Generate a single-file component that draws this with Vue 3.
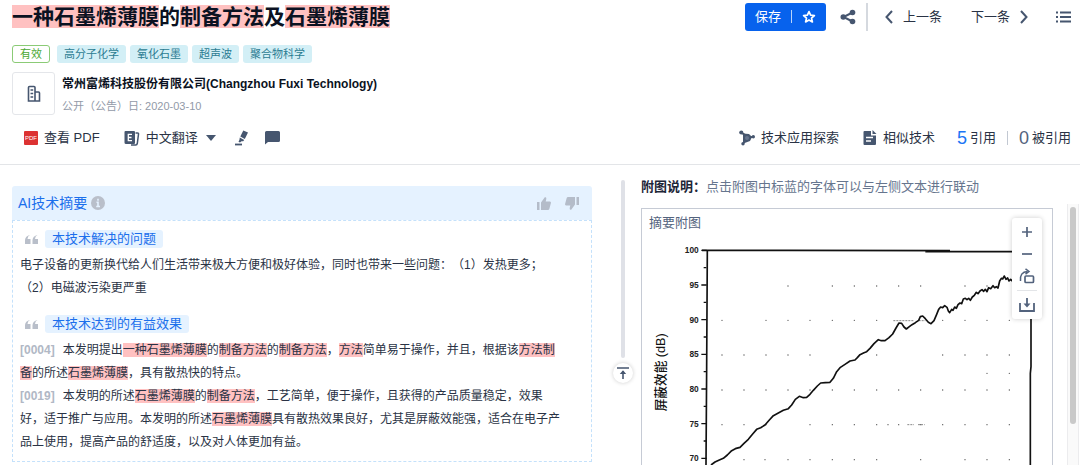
<script setup>
const title = [
  { t: '一种石墨烯薄膜', m: true },
  { t: '的' },
  { t: '制备方法', m: true },
  { t: '及' },
  { t: '石墨烯薄膜', m: true },
]

const tags = ['高分子化学', '氧化石墨', '超声波', '聚合物科学']

const effects = [
  {
    no: '[0004]',
    lines: [
      [
        { t: '本发明提出' },
        { t: '一种石墨烯薄膜', m: true },
        { t: '的' },
        { t: '制备方法', m: true },
        { t: '的' },
        { t: '制备方法', m: true },
        { t: '，' },
        { t: '方法', m: true },
        { t: '简单易于操作，并且，根据该' },
        { t: '方法制', m: true },
      ],
      [
        { t: '备', m: true },
        { t: '的所述' },
        { t: '石墨烯薄膜', m: true },
        { t: '，具有散热快的特点。' },
      ],
    ],
  },
  {
    no: '[0019]',
    lines: [
      [
        { t: '本发明的所述' },
        { t: '石墨烯薄膜', m: true },
        { t: '的' },
        { t: '制备方法', m: true },
        { t: '，工艺简单，便于操作，且获得的产品质量稳定，效果' },
      ],
      [
        { t: '好，适于推广与应用。本发明的所述' },
        { t: '石墨烯薄膜', m: true },
        { t: '具有散热效果良好，尤其是屏蔽效能强，适合在电子产' },
      ],
      [{ t: '品上使用，提高产品的舒适度，以及对人体更加有益。' }],
    ],
  },
]

const ticks = [100, 95, 90, 85, 80, 75, 70].map((v, i) => ({ v, y: 151 + i * 104 }))

const dotRows = [
  { y: 258, xs: [444, 577, 643, 710, 776, 842, 975, 1041] },
  { y: 361, xs: [246, 378, 444, 510, 577, 643, 710, 908, 975, 1041, 1108] },
  { y: 465, xs: [246, 312, 378, 444, 510, 710, 908, 975, 1041, 1108] },
  { y: 520, xs: [1041, 1108] },
  { y: 570, xs: [246, 312, 378, 444, 510, 577, 643, 710, 776, 842, 908, 975, 1041, 1108] },
  { y: 674, xs: [246, 312, 378, 510, 577, 643, 710, 744, 776, 842, 908, 975, 1041, 1108] },
  { y: 779, xs: [312, 375, 444, 510, 577, 643, 710, 842, 975, 1041, 1108] },
]
const dots = dotRows.flatMap((r) => r.xs.map((x) => ({ x, y: r.y })))

const curve =
  '213,795 225,786 238,780 250,775 262,765 275,752 286,746 300,742 312,730 325,718 338,702 350,688 362,683 375,675 388,660 400,647 415,639 430,631 445,626 455,615 466,598 478,589 490,593 500,592 510,583 520,571 532,558 542,549 556,548 570,547 580,535 590,515 600,503 615,493 630,483 645,480 652,473 660,464 ' +
  '672,458 680,455 690,445 702,431 715,419 724,422 735,422 747,413 758,402 768,384 777,369 785,370 792,381 799,387 808,380 816,374 826,368 836,361 841,350 848,348 856,356 865,367 873,371 882,362 890,343 896,328 902,321 908,323 914,317 921,322 925,333 929,338 935,328 939,331 944,321 949,325 954,314 960,309 965,311 970,297 976,295 981,299 986,295 991,301 997,291 1003,286 1009,277 1014,281 1020,273 1026,269 1031,274 1036,268 1041,275 1046,263 1052,266 1059,257 1064,263 1069,260 1074,264 1079,243 1084,235 1088,237 1093,228 1098,238 1103,234 1107,243 1112,238 1118,244'
</script>

<template>
  <div class="page">
    <header class="head">
      <div class="title-row">
        <h1>
          <template v-for="(s, i) in title" :key="i"><mark v-if="s.m">{{ s.t }}</mark><template v-else>{{ s.t }}</template></template>
        </h1>
        <div class="actions">
          <button class="save" type="button">
            <span>保存</span>
            <i class="save-sep"></i>
            <svg width="14" height="14" viewBox="0 0 14 14"><path d="M7 1.600l1.600 3.500 3.800.4-2.900 2.600.9 3.800L7 10l-3.400 1.900.9-3.800L1.600 5.500l3.800-.4z" fill="none" stroke="#fff" stroke-width="1.700" stroke-linejoin="round" /></svg>
          </button>
          <button class="plain share" type="button" aria-label="分享">
            <svg width="16" height="16" viewBox="0 0 16 16"><path d="M12.500 3.500L3.500 8l9 4.500" fill="none" stroke="#46566f" stroke-width="2" /><g fill="#46566f"><circle cx="12.500" cy="3.500" r="2.800" /><circle cx="3.300" cy="8" r="2.800" /><circle cx="12.500" cy="12.500" r="2.800" /></g></svg>
          </button>
          <i class="bar"></i>
          <button class="plain prev" type="button">
            <svg width="8" height="14" viewBox="0 0 8 14"><path d="M7 1L1.500 7 7 13" fill="none" stroke="#46566f" stroke-width="2" /></svg>
            <span>上一条</span>
          </button>
          <button class="plain next" type="button">
            <span>下一条</span>
            <svg width="8" height="14" viewBox="0 0 8 14"><path d="M1 1L6.500 7 1 13" fill="none" stroke="#46566f" stroke-width="2" /></svg>
          </button>
          <button class="plain list" type="button" aria-label="目录">
            <svg width="15" height="12" viewBox="0 0 15 12"><path d="M0 1.500h2M0 6h2M0 10.500h2M4 1.500h11M4 6h11M4 10.500h11" stroke="#46566f" stroke-width="2" /></svg>
          </button>
        </div>
      </div>

      <div class="tags">
        <span class="tag valid">有效</span>
        <span v-for="t in tags" :key="t" class="tag">{{ t }}</span>
      </div>

      <div class="owner">
        <div class="logo">
          <svg width="14" height="18" viewBox="0 0 14 18"><path d="M1.500 16V2.500Q1.500 1.500 2.500 1.500H7q1 0 1 1V16M8 7h3.500q1 0 1 1V16M0.700 16h12.600M3.500 5h2.700M3.500 8.500h2.700M3.500 12h2.700" fill="none" stroke="#46566f" stroke-width="1.600" /></svg>
        </div>
        <div>
          <div class="company">常州富烯科技股份有限公司(Changzhou Fuxi Technology)</div>
          <div class="date">公开（公告）日: 2020-03-10</div>
        </div>
      </div>

      <div class="tools">
        <button class="plain" type="button">
          <svg width="14" height="14" viewBox="0 0 14 14"><rect width="14" height="14" rx="1" fill="#dc3232" /><text x="7" y="9" text-anchor="middle" font-size="6" fill="#fff" font-family="Liberation Sans, sans-serif">PDF</text></svg>
          <span>查看 PDF</span>
        </button>
        <button class="plain translate" type="button">
          <svg width="16" height="16" viewBox="0 0 16 16"><path d="M1.500 1h8.500q1 0 1 1v11q0 1-1 1H2q-1.500 0-1.500-1.500V2q0-1 1-1z" fill="#46566f" /><path d="M8 4.300H4.300v6.400H8M4.300 7.500h3.200" fill="none" stroke="#fff" stroke-width="1.300" /><path d="M11.500 3h2q1.200 0 1 1.200L13.300 13.500q-.3 1.500-1.500 1.500H7" fill="none" stroke="#46566f" stroke-width="1.500" /></svg>
          <span>中文翻译</span>
          <svg class="caret" width="10" height="6" viewBox="0 0 10 6"><path d="M0 0h10L5 6z" fill="#46566f" /></svg>
        </button>
        <button class="plain pen" type="button" aria-label="高亮">
          <svg width="14" height="16" viewBox="0 0 14 16"><path d="M8.300 0.500L13 2.500 9.800 9 5.300 6.600zM4.800 7.600l4.400 2.300-1 1.300H6.500L5 12.500l-1.500-.8.900-1.800z" fill="#46566f" /><path d="M0 14.500h7" stroke="#46566f" stroke-width="1.800" /></svg>
        </button>
        <button class="plain note" type="button" aria-label="备注">
          <svg width="15" height="14" viewBox="0 0 15 14"><path d="M1.500 0h12Q15 0 15 1.500v8q0 1.500-1.500 1.500H3L0 13.500v-12Q0 0 1.500 0z" fill="#46566f" /></svg>
        </button>
        <div class="tools-right">
          <button class="plain" type="button">
            <svg width="16" height="16" viewBox="0 0 16 16"><path d="M2.500 2.500L8 8l6-1M8 8l-4 6" stroke="#46566f" stroke-width="1.500" /><g fill="#46566f"><circle cx="2.300" cy="2.500" r="2.100" /><circle cx="14.300" cy="6.800" r="1.700" /><circle cx="4" cy="13.800" r="1.700" /><path d="M4 3.500l6 .5 3 3-2 4-4 1.500-3 1z" /></g><circle cx="8" cy="8" r="2" fill="#66758e" /></svg>
            <span>技术应用探索</span>
          </button>
          <button class="plain similar" type="button">
            <svg width="14" height="16" viewBox="0 0 14 16"><path d="M1.500 1H8v4.500h5V14q0 1-1 1H1.500q-1 0-1-1V2q0-1 1-1z" fill="#46566f" /><path d="M9.500 0L13.500 4h-4z" fill="#46566f" /><path d="M3 7.500h7M3 11h5" stroke="#fff" stroke-width="1.500" /></svg>
            <span>相似技术</span>
          </button>
          <a class="cite blue" href="#cites"><b>5</b>引用</a>
          <i class="cite-sep"></i>
          <a class="cite" href="#cited"><b>0</b>被引用</a>
        </div>
      </div>
    </header>

    <main class="body">
      <section class="summary">
        <div class="sum-head">
          <h2>AI技术摘要</h2>
          <svg width="14" height="14" viewBox="0 0 14 14"><circle cx="7" cy="7" r="7" fill="#b9bfca" /><path d="M7 2.800v2M5.500 6.300H7v4M5.200 10.500h3.800" fill="none" stroke="#e5f2ff" stroke-width="1.600" /></svg>
          <div class="votes">
            <button class="plain" type="button" aria-label="赞">
              <svg width="14" height="13" viewBox="0 0 14 13"><path d="M0 5h2.500v8H0zM4 5.500L8 0q1.800.3 1.300 2L8.700 4.500H13q1 .2 1 1.200L12.300 12q-.3 1-1.300 1H4z" fill="#b4bcc9" /></svg>
            </button>
            <button class="plain" type="button" aria-label="踩">
              <svg width="14" height="13" viewBox="0 0 14 13"><path transform="rotate(180 7 6.500)" d="M0 5h2.500v8H0zM4 5.500L8 0q1.800.3 1.300 2L8.700 4.500H13q1 .2 1 1.200L12.300 12q-.3 1-1.300 1H4z" fill="#b4bcc9" /></svg>
            </button>
          </div>
        </div>
        <div class="sum-body">
          <div class="sub">
            <svg width="13" height="9" viewBox="0 0 13 9"><path d="M5 0Q2.600 1.200 2.500 4H5.500v5H0V5Q.3 1 5 0zM12.500 0Q10.100 1.200 10 4h3v5H7.500V5Q7.800 1 12.500 0z" fill="#b9bfca" /></svg>
            <h3>本技术解决的问题</h3>
          </div>
          <p>电子设备的更新换代给人们生活带来极大方便和极好体验，同时也带来一些问题：（1）发热更多；<br />（2）电磁波污染更严重</p>
          <div class="sub second">
            <svg width="13" height="9" viewBox="0 0 13 9"><path d="M5 0Q2.600 1.200 2.500 4H5.500v5H0V5Q.3 1 5 0zM12.500 0Q10.100 1.200 10 4h3v5H7.500V5Q7.800 1 12.500 0z" fill="#b9bfca" /></svg>
            <h3>本技术达到的有益效果</h3>
          </div>
          <p v-for="e in effects" :key="e.no">
            <b class="no">{{ e.no }}</b>
            <template v-for="(line, li) in e.lines" :key="li"><br v-if="li" /><template v-for="(s, i) in line" :key="i"><mark v-if="s.m">{{ s.t }}</mark><template v-else>{{ s.t }}</template></template></template>
          </p>
        </div>
      </section>

      <div class="splitter">
        <i></i>
        <button type="button" aria-label="回到顶部">
          <svg width="12" height="12" viewBox="0 0 12 12"><path d="M0 1h12M6 12V4" stroke="#46566f" stroke-width="1.600" /><path d="M2.800 7L6 3.200 9.200 7z" fill="#46566f" /></svg>
        </button>
      </div>

      <section class="drawing">
        <p class="hint"><b>附图说明：</b>点击附图中标蓝的字体可以与左侧文本进行联动</p>
        <figure>
          <figcaption>摘要附图</figcaption>
          <svg class="chart" viewBox="6 111 1230 684" font-family="Liberation Sans, sans-serif">
            <path d="M186 151H445L930 152M856 155H1173" fill="none" stroke="#111" stroke-width="5" />
            <path d="M202 150L200 500 198 795M1173 155V500L1171 520V795" fill="none" stroke="#111" stroke-width="5" />
            <g v-for="t in ticks" :key="t.v">
              <path :d="`M184 ${t.y}h16M191 ${t.y + 52}h8`" stroke="#111" stroke-width="4" />
              <text x="176" :y="t.y + 9" text-anchor="end" font-size="25" font-weight="700" fill="#222">{{ t.v }}</text>
            </g>
            <circle v-for="d in dots" :key="`${d.x}-${d.y}`" :cx="d.x" :cy="d.y" r="2" fill="#555" />
            <path d="M760 362h62M836 362h20M802 674h20M834 674h20" stroke="#888" stroke-width="3" stroke-dasharray="6 3" />
            <polyline :points="curve" fill="none" stroke="#111" stroke-width="5" stroke-linejoin="round" />
            <text transform="translate(75 634) rotate(-90)" font-size="38" font-weight="500" fill="#111" class="axis">屏蔽效能 (dB)</text>
          </svg>
          <div class="zoombar">
            <button class="plain" type="button" aria-label="放大"><svg width="16" height="16" viewBox="0 0 16 16"><path d="M8 3v10M3 8h10" stroke="#53637d" stroke-width="1.700" /></svg></button>
            <button class="plain" type="button" aria-label="缩小"><svg width="16" height="16" viewBox="0 0 16 16"><path d="M3 8h10" stroke="#53637d" stroke-width="1.700" /></svg></button>
            <button class="plain" type="button" aria-label="旋转"><svg width="16" height="16" viewBox="0 0 16 16"><path d="M1.500 13Q.5 4 8.500 3.500M6.500 0.800L10 3.500 6.500 6.200" fill="none" stroke="#53637d" stroke-width="1.500" /><rect x="6" y="8" width="8.500" height="6.500" rx="1" fill="none" stroke="#53637d" stroke-width="1.700" /></svg></button>
            <hr />
            <button class="plain" type="button" aria-label="下载"><svg width="16" height="16" viewBox="0 0 16 16"><path d="M1 6v8h14V6M8 1v8" fill="none" stroke="#53637d" stroke-width="1.800" /><path d="M4.500 6.500h7L8 10.500z" fill="#53637d" /></svg></button>
          </div>
        </figure>
      </section>

      <div class="scroll"><i></i></div>
    </main>
  </div>
</template>

<style>
body {
  background: #fff;
}
</style>

<style scoped>
* {
  box-sizing: border-box;
}
.page {
  height: 100vh;
  display: flex;
  flex-direction: column;
  overflow: hidden;
  font: 13px/20px "Liberation Sans", "Noto Sans CJK SC", sans-serif;
  text-spacing-trim: space-all;
  color: #2a3345;
}
h1,
h2,
h3,
p,
figure {
  margin: 0;
  font-weight: 400;
}
svg {
  display: block;
  flex: none;
}
mark {
  background: #ffc1c1;
  color: inherit;
}
button {
  font: inherit;
  color: inherit;
  cursor: pointer;
}
.plain {
  display: flex;
  align-items: center;
  gap: 6px;
  padding: 0;
  border: 0;
  background: none;
  white-space: nowrap;
}
.head {
  flex: none;
  padding-left: 12px;
  border-bottom: 1px solid #e3e5e8;
}
.title-row {
  display: flex;
  align-items: center;
  justify-content: space-between;
  height: 33px;
}
h1 {
  font-size: 21px;
  line-height: 32px;
  font-weight: 700;
  color: #0b1222;
}
.actions {
  display: flex;
  align-items: center;
  padding-right: 9px;
}
.save {
  display: flex;
  align-items: center;
  gap: 10px;
  height: 28px;
  padding: 0 10px;
  border: 0;
  border-radius: 3px;
  background: #0762ed;
  color: #fff;
}
.save-sep {
  width: 1px;
  height: 13px;
  background: #b9d3fa;
}
.share {
  margin-left: 14px;
}
.bar {
  width: 2px;
  height: 28px;
  margin-left: 10px;
  background: #d5d9df;
}
.prev {
  margin-left: 17px;
  gap: 10px;
}
.next {
  margin-left: 29px;
  gap: 10px;
}
.list {
  margin-left: 28px;
}
.tags {
  display: flex;
  gap: 4px;
  margin-top: 12px;
}
.tag {
  height: 18px;
  padding: 0 7px;
  border-radius: 3px;
  background: #d3eff6;
  color: #2b7c92;
  font-size: 11px;
  line-height: 18px;
}
.valid {
  margin-right: 3px;
  border: 1px solid #8bcb76;
  background: #fff;
  color: #4ca834;
  line-height: 16px;
}
.owner {
  display: flex;
  gap: 7px;
  margin-top: 9px;
}
.logo {
  display: grid;
  place-items: center;
  width: 43px;
  height: 43px;
  border: 1px solid #e4e6ea;
  border-radius: 3px;
}
.company {
  margin-top: 2px;
  font-size: 12px;
  font-weight: 700;
  color: #0b1222;
}
.date {
  margin-top: 2px;
  font-size: 11px;
  color: #929aa8;
}
.tools {
  display: flex;
  align-items: center;
  height: 48px;
  padding: 0 9px 4px 12px;
}
.translate {
  margin-left: 24px;
}
.caret {
  margin-left: 2px;
}
.pen {
  margin-left: 19px;
}
.note {
  margin-left: 16px;
}
.tools-right {
  display: flex;
  align-items: center;
  margin-left: auto;
}
.similar {
  margin-left: 24px;
}
.cite {
  display: flex;
  align-items: center;
  gap: 3px;
  color: inherit;
  text-decoration: none;
}
.cite b {
  font-size: 18px;
  font-weight: 400;
  color: #53637d;
}
.cite.blue {
  margin-left: 22px;
}
.cite.blue b {
  color: #1b75f5;
}
.cite-sep {
  width: 1px;
  height: 14px;
  margin: 0 11px;
  background: #c2c8d2;
}
.body {
  flex: 1;
  min-height: 0;
  display: flex;
  padding: 0 1px 0 12px;
}
.summary {
  flex: 580 1 0;
  align-self: flex-start;
  min-width: 0;
  margin-top: 21px;
}
.sum-head {
  display: flex;
  align-items: center;
  gap: 4px;
  height: 34px;
  padding: 0 13px 0 6px;
  border-radius: 3px 3px 0 0;
  background: #e5f2ff;
}
h2 {
  font-size: 14px;
  color: #1b6fec;
}
.votes {
  display: flex;
  gap: 14px;
  margin-left: auto;
}
.sum-body {
  padding: 9px 7px 7px;
  border: 1px dashed #c4e1fb;
}
.sub {
  display: flex;
  align-items: center;
  gap: 7px;
  padding-left: 5px;
  margin-bottom: 6px;
}
.second {
  margin-top: 15px;
}
h3 {
  padding: 0 7px;
  border-radius: 3px;
  background: #e5f2ff;
  color: #1b6fec;
  font-size: 13px;
  line-height: 18px;
}
.sum-body p {
  font-size: 12px;
  line-height: 23px;
  white-space: nowrap;
}
.no {
  margin-right: 8px;
  color: #b1b8c5;
}
.splitter {
  flex: none;
  display: flex;
  flex-direction: column;
  align-items: center;
  gap: 5px;
  width: 22px;
  margin: 15px 7px 0 20px;
}
.splitter i {
  width: 4px;
  height: 178px;
  border-radius: 2px;
  background: #dfe1e7;
}
.splitter button {
  display: grid;
  place-items: center;
  width: 20px;
  height: 20px;
  padding: 0;
  border: 0;
  border-radius: 50%;
  background: #fff;
  box-shadow: 0 0 4px #0003;
}
.drawing {
  flex: 412 1 0;
  min-width: 0;
  display: flex;
  flex-direction: column;
  padding-top: 12px;
}
.hint {
  color: #66758e;
  white-space: nowrap;
}
.hint b {
  color: #1d2638;
}
figure {
  position: relative;
  flex: 1;
  min-height: 0;
  margin-top: 11px;
  overflow: hidden;
  border: 1px solid #c6cbd5;
  border-bottom: 0;
}
figcaption {
  padding: 4px 7px;
  color: #53637d;
}
.chart {
  width: 100%;
}
.axis {
  font-family: "Liberation Sans", "Noto Sans CJK SC", sans-serif;
}
.zoombar {
  position: absolute;
  top: 9px;
  right: 10px;
  display: flex;
  flex-direction: column;
  align-items: center;
  gap: 6px;
  width: 30px;
  padding: 6px 0;
  border-radius: 3px;
  background: #fff;
  box-shadow: 0 0 5px #0003;
}
.zoombar hr {
  width: 20px;
  margin: 0;
  border: 0;
  border-top: 1px solid #e3e5e8;
}
.scroll {
  flex: none;
  width: 12px;
  margin: 39px 0 0 14px;
  padding: 3px 2px;
  border: solid #ececee;
  border-width: 0 1px;
  background: #fafafa;
}
.scroll i {
  display: block;
  width: 6px;
  height: 217px;
  border-radius: 3px;
  background: #c9c9c9;
}
</style>
